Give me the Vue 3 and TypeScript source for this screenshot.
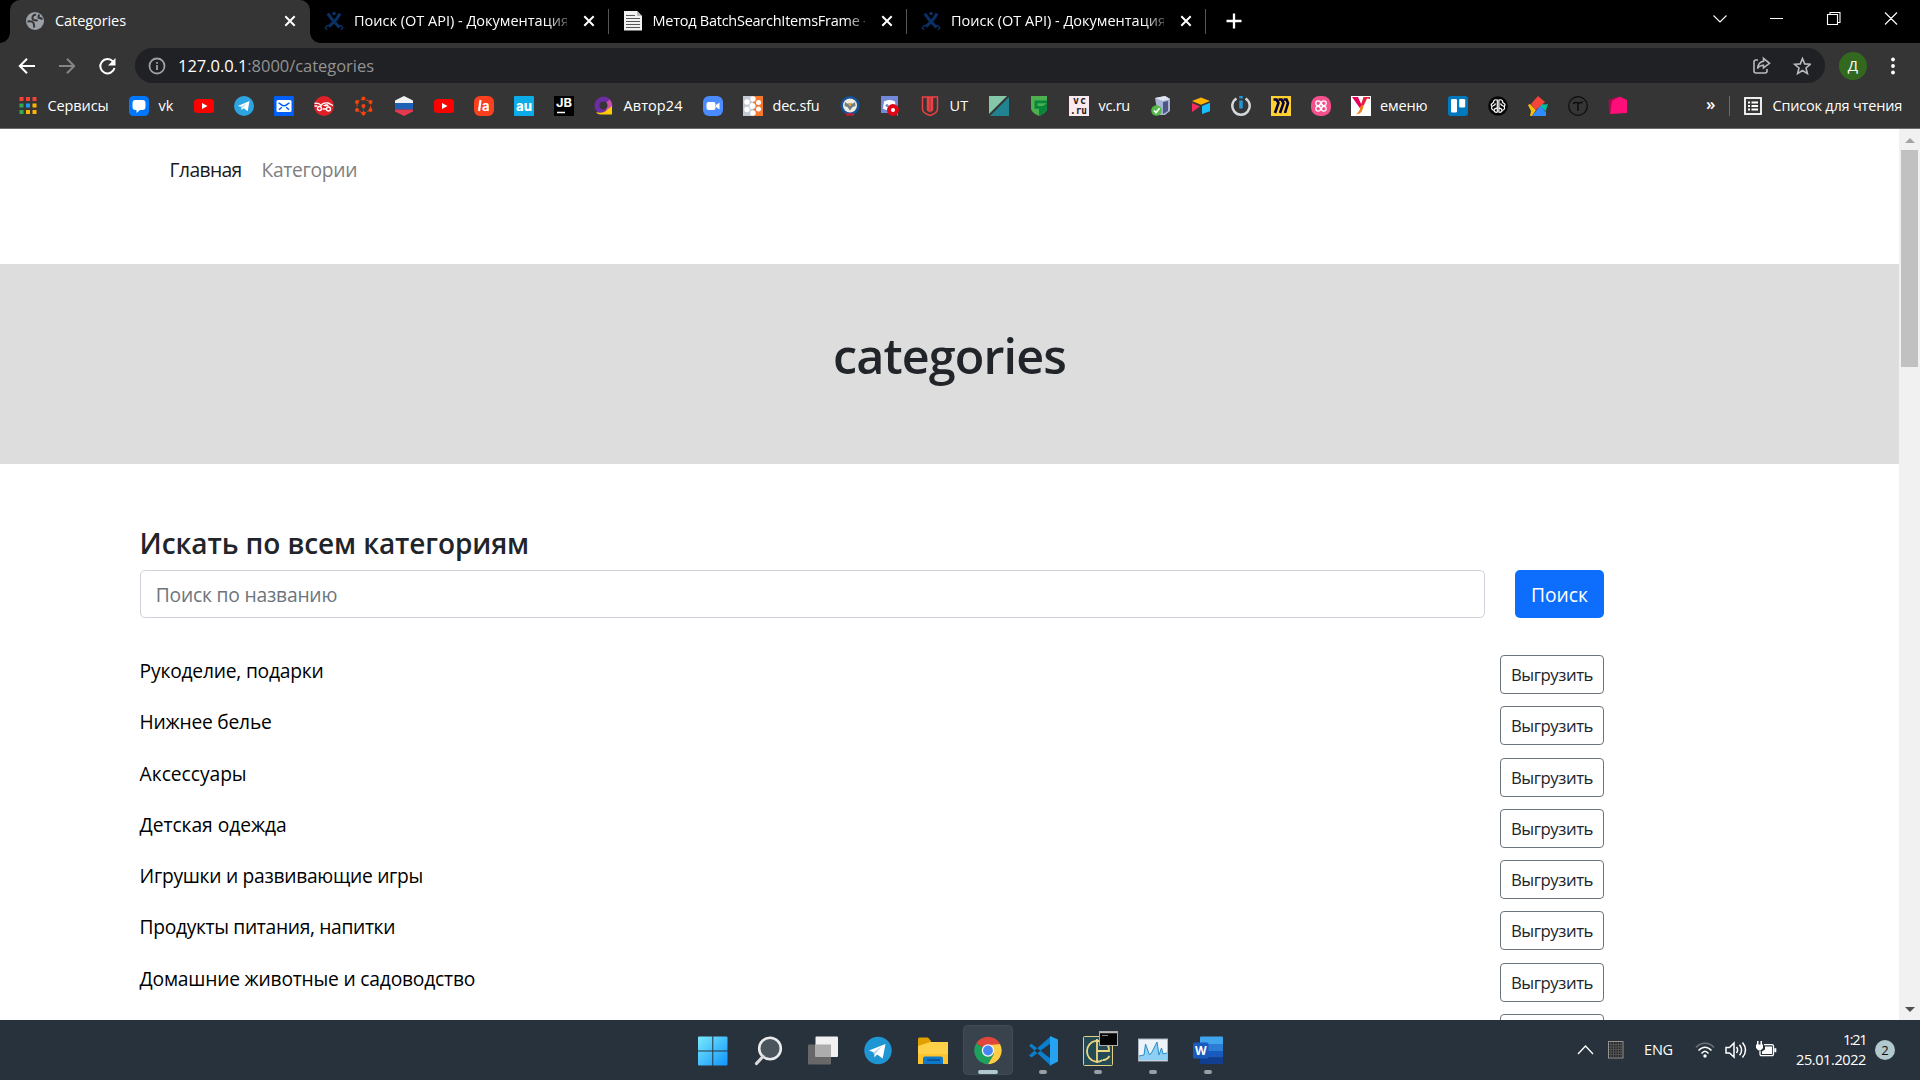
<script setup lang="ts">
import type { Directive } from 'vue'

interface Tab {
  title: string
  icon: string
  fit: number
}

interface Bookmark {
  icon: string
  label?: string
  width?: number
}

/* Tracks a label out (or in) so that it takes exactly the given width. */
const vFit: Directive<HTMLElement, number> = {
  mounted(el, { value }) {
    const length = (el.textContent ?? '').trim().length
    const natural = el.getBoundingClientRect().width
    el.style.letterSpacing = `${(value - natural) / length}px`
  },
}

const glyphs: Record<string, string> = {
  globe:
    '<circle cx="10" cy="10" r="9" fill="#9aa0a6"/><path d="M11 3.500C8 4 6.500 6 8 8.500c1 1.500 3.500 0 4.500 1.500M2.500 10.500c3-.5 5 0 6 1.500s0 3 1 4.500M14 3.500l-.5 3 4 1.500" fill="none" stroke="#353535" stroke-width="2"/>',
  confluence:
    '<g fill="none" stroke="#0b3066"><path d="M4 2.500c2.500 5 7 9 11.500 14M16 2.500c-2.500 5-5.500 8.500-11 13" stroke-width="3"/><path d="M5 14.500C1 15 0 17.500 3.500 18.500M15 14.500c4 .5 5 3 1.500 4" stroke-width="1.300"/></g><circle cx="10" cy="2.500" r="1.800" fill="#0b3066"/>',
  page:
    '<path d="M1 0h13l5 5v14.500H1z" fill="#f1f1f1"/><path d="M14 0v5h5" fill="#bbb"/><path d="M3 4.500h9M3 7.500h14M3 10.500h14M3 13.500h14M3 16.500h14" stroke="#555" stroke-width="1.200"/>',
  apps:
    '<path d="M1.500 1h4v4h-4zM8 1h4v4H8zM14.500 1h4v4h-4z" fill="#f44336"/><path d="M1.500 7.500h4v4h-4zM1.500 14h4v4h-4z" fill="#34a853"/><path d="M8 7.500h4v4H8z" fill="#2196f3"/><path d="M14.500 7.500h4v4h-4zM8 14h4v4H8zM14.500 14h4v4h-4z" fill="#fbb400"/>',
  vk:
    '<rect width="20" height="20" rx="4.500" fill="#0077ff"/><path d="M6.500 4h7a3 3 0 0 1 3 3v4a3 3 0 0 1-3 3H11l-3.500 3v-3h-1a3 3 0 0 1-3-3V7a3 3 0 0 1 3-3z" fill="#fff"/>',
  youtube: '<rect y="3" width="20" height="14" rx="3.500" fill="#f00"/><path d="M8 7l5.500 3L8 13z" fill="#fff"/>',
  telegram:
    '<circle cx="10" cy="10" r="10" fill="#2ca5e0"/><path d="M3.800 10 15.500 5l-1.800 10.200-4-3-2 1.900-.5-3.300z" fill="#fff"/><path d="M7.200 10.800L12.800 7l-4.500 5-.6 2z" fill="#a9d6ee"/>',
  mail:
    '<rect width="20" height="20" rx="1" fill="#005ff9"/><rect x="2.500" y="4" width="15" height="12" rx="1.500" fill="#fff"/><path d="M4.500 7c2 .3 3 2.800 5.500 2.800S13.500 7.300 15.500 7M5 13.800l2.800-2.600M15 13.800l-2.800-2.600" fill="none" stroke="#005ff9" stroke-width="1.500"/>',
  car:
    '<circle cx="10" cy="10" r="10" fill="#e01f26"/><path d="M.5 7.500c3-1 5 0 6.500 2 1.500-2.500 4-3 7-2.500 2 .4 3 2 5 2.500M.5 10h3M8.500 13h4" fill="none" stroke="#fff" stroke-width="1.400"/><path d="M9 10c1-1.500 3-2 5-1.500l1 2z" fill="#fff"/><circle cx="5.500" cy="12.500" r="2" fill="none" stroke="#fff" stroke-width="1.300"/><circle cx="14.500" cy="13" r="2" fill="none" stroke="#fff" stroke-width="1.300"/>',
  nodes:
    '<path d="M9.500 2.500 3 6v8l6.500 3.500 7-3.500V6zM9.500 10v7" fill="none" stroke="#f4430d" stroke-width="1" stroke-dasharray="3 1.500"/><g fill="#f4430d"><circle cx="9.500" cy="2.500" r="2"/><circle cx="3" cy="6" r="2"/><circle cx="16.500" cy="6" r="2"/><circle cx="3" cy="14" r="2"/><circle cx="16.500" cy="14" r="2"/><circle cx="9.500" cy="17.500" r="2"/><circle cx="9.500" cy="10" r="2"/></g>',
  hexflag:
    '<path d="M10 0l9 4.500V7H1V4.500z" fill="#f1f1f4"/><path d="M1 7h18v6.500H1z" fill="#1c62b7"/><path d="M1 13.500h18v2L10 20l-9-4.500z" fill="#e53950"/>',
  orange:
    '<rect width="20" height="20" rx="6" fill="#fc3f1d"/><path d="M6.500 4L5 15" stroke="#fff" stroke-width="2.200"/><text x="8" y="15" font-family="Inter" font-size="13" font-weight="700" fill="#fff">a</text>',
  au: '<rect width="20" height="20" rx="1" fill="#0bace8"/><text x="2" y="14.500" font-family="Inter" font-size="13" font-weight="800" fill="#fff" textLength="16" lengthAdjust="spacingAndGlyphs">au</text>',
  jb: '<rect width="20" height="20" fill="#000"/><text x="2" y="11" font-family="Inter" font-size="11.500" font-weight="700" fill="#fff" textLength="16" lengthAdjust="spacingAndGlyphs">JB</text><path d="M3 16.500h8" stroke="#fff" stroke-width="1.500"/>',
  avtor:
    '<circle cx="9.500" cy="9.500" r="6.500" fill="none" stroke="#6e2ca5" stroke-width="5"/><path d="M14 5A6.500 6.500 0 0 1 13 15" fill="none" stroke="#c650a8" stroke-width="4.500"/><path d="M11 15.500l7-5.500v8.500H7c-2.500 0-4-.8-5-2.500 3 1 6 1 9-.5z" fill="#fc0"/>',
  zoom: '<rect width="20" height="20" rx="6" fill="#4a8cff"/><rect x="3.500" y="6" width="9" height="8" rx="2" fill="#fff"/><path d="M13 9l3.500-2.500v7L13 11z" fill="#fff"/>',
  dec: '<rect width="10" height="20" fill="#c3cad6"/><rect x="10" width="10" height="20" fill="#f6782c"/><g fill="#fff"><circle cx="4" cy="6" r="2.700"/><circle cx="10" cy="3" r="2.700"/><circle cx="9.500" cy="10" r="3"/><circle cx="4" cy="13.500" r="2.700"/><circle cx="10" cy="17" r="2.700"/><circle cx="15.500" cy="6.500" r="2.500"/><circle cx="15.500" cy="13" r="2.500"/></g>',
  owl: '<circle cx="10" cy="9.500" r="9.500" fill="#14539a"/><circle cx="10" cy="9.500" r="7" fill="#efece0"/><path d="M5 6l2 1.500h6L15 6l.5 4-3 1-2.500 3.500L7.500 11l-3-1z" fill="#6d7b8a"/><circle cx="10" cy="8.500" r="1.500" fill="#dfa72e"/><path d="M6 18.500h8" stroke="#b81f36" stroke-width="2.500"/>',
  discord:
    '<path d="M1 0h17v20l-4-3H1z" fill="#7289da"/><path d="M4 5.500c4-2 7-2 11 0l1 7-3 1.500H6l-3-1.500z" fill="#fff"/><circle cx="7" cy="9.500" r="1.500" fill="#7289da"/><circle cx="13" cy="14" r="6" fill="#df0615"/><circle cx="13" cy="14" r="2" fill="#fff"/>',
  ut: '<path d="M2.500 1h15v12c0 3-3 5-7.500 6.500C5.500 18 2.500 16 2.500 13zM7.500 1v13l1.500 1V1M12.500 1v13l-1.500 1V1" fill="none" stroke="#ef4044" stroke-width="1.500"/>',
  diag: '<path d="M0 0h18L0 18z" fill="#84c8a9"/><path d="M20 1v19H1z" fill="#218390"/>',
  fshield: '<path d="M2 0h16v12c0 4-4 6-8 8-4-2-8-4-8-8z" fill="#4caf50"/><path d="M10 20c4-2 8-4 8-8V7l-8 6z" fill="#08863a"/><path d="M5.500 4.500H18v2.700H8.500V10H14v2.700H5.500z" fill="#08863a"/>',
  vc: '<rect width="20" height="20" fill="#fdeaee"/><g font-family="DejaVu Sans Mono, monospace" font-size="10" font-weight="700" fill="#222"><text x="4" y="8" textLength="13">vc</text><text x="1" y="17.500" textLength="17" lengthAdjust="spacingAndGlyphs">.ru</text></g>',
  server:
    '<path d="M4 2l10-2 5 3v12l-5 4H7z" fill="#aab2d5"/><path d="M4 2l10-2 5 3-7 2z" fill="#e1e4f3"/><path d="M12 6l5-1v10l-5 3z" fill="#4c5787"/><circle cx="5.500" cy="14.500" r="5.300" fill="#55b948"/><path d="M3 14.500l2 2.200 3.500-4.500" fill="none" stroke="#fff" stroke-width="1.800"/>',
  airtable: '<path d="M1 5l9-3.500L19 5l-9 3.700z" fill="#fcb400"/><path d="M1 7l8 3.500L1 16z" fill="#f82b60"/><path d="M11 10l8-3.200v8.500L11 18z" fill="#18bfff"/>',
  power:
    '<path d="M5.500 2.500A8.700 8.700 0 1 0 14.500 2.500" fill="none" stroke="#d5d8da" stroke-width="2.500"/><path d="M10 0v2.500M10 4.500v8" stroke="#2196d9" stroke-width="3.500"/>',
  miro: '<rect width="20" height="20" fill="#ffd02f"/><path d="M2.500 3.500h3l2 3.500L4 17M7.500 3.500h3l2 3.500L9 17M12.500 3.500h3l1.500 3.500L14 17" fill="none" stroke="#050038" stroke-width="2.600"/>',
  pink: '<rect width="20" height="20" rx="8.500" fill="#f3508c"/><g fill="none" stroke="#fff" stroke-width="1.300"><circle cx="7.200" cy="7.200" r="2.400"/><circle cx="12.800" cy="7.200" r="2.400"/><circle cx="7.200" cy="12.800" r="2.400"/><circle cx="12.800" cy="12.800" r="2.400"/><circle cx="10" cy="10" r="1.800"/></g>',
  emenu:
    '<rect width="20" height="20" fill="#fff"/><path d="M1 1h6l4 9-1.500 3z" fill="#e4005a"/><path d="M9.500 10l3.500-1-2 6c-1 2.500-4 3-6 3.500 2-2 3-3 4-5.500z" fill="#ef7d16"/><path d="M12.500 1H19v2l-3-.5L13 9l-3.500 1z" fill="#e4203a"/>',
  trello: '<rect width="20" height="20" rx="3" fill="#0079bf"/><rect x="3" y="3" width="6" height="13.500" rx="1.300" fill="#fff"/><rect x="11.200" y="3" width="6" height="8.500" rx="1.300" fill="#fff"/>',
  brain:
    '<circle cx="10" cy="10" r="9.800" fill="#050505"/><g fill="none" stroke="#fff" stroke-width="1.200"><path d="M9.300 3.500v13M10.900 3.500v13M9.300 4C6 3 5.500 5 5.500 6.500c-3 1.500-2.500 3-1.500 4-1 2 0 3.500 2 4 .5 2 2.500 2 3.300 1.500M10.900 4c3.300-1 3.800 1 3.800 2.500 3 1.500 2.500 3 1.500 4 1 2 0 3.500-2 4-.5 2-2.500 2-3.300 1.500M4 10.500c1.500-1 3-1 3.500-3M6 14.500c0-2 1-2 3-2.500M16 10.500c-1.500-1-3-1-3.500-3M14 14.500c0-2-1-2-3-2.500"/></g>',
  pentagon:
    '<path d="M0 9l2-1 6 6-4 6H2l1-5z" fill="#fbbc05"/><path d="M20 8l-3 .5L13 8l-1 3 6 4 .5-3z" fill="#00bfa0"/><path d="M10 0l7 6-9 8-5-6z" fill="#f8453a"/><path d="M12 10l6 6v4H4z" fill="#2f8bff"/>',
  tcircle:
    '<circle cx="10" cy="10" r="9.300" fill="none" stroke="#0c0c0c" stroke-width="1.200"/><path d="M5.500 8c0-2 2-1.700 4.500-1.200s4 .3 4.500-1.300M10 7v8" fill="none" stroke="#0c0c0c" stroke-width="1.500"/>',
  pinkbox: '<path d="M.5 4L8 1l4 3-8 12-3-1z" fill="#a50d52"/><path d="M4 5l7.500-4.500L19 4v13L2 18z" fill="#ff0d78"/>',
}

const tabs: Tab[] = [
  { title: 'Поиск (ОТ API) - Документация', icon: 'confluence', fit: 215 },
  { title: 'Метод BatchSearchItemsFrame -', icon: 'page', fit: 215 },
  { title: 'Поиск (ОТ API) - Документация', icon: 'confluence', fit: 215 },
]

const bookmarks: Bookmark[] = [
  { icon: 'apps', label: 'Сервисы', width: 61 },
  { icon: 'vk', label: 'vk', width: 15 },
  { icon: 'youtube' },
  { icon: 'telegram' },
  { icon: 'mail' },
  { icon: 'car' },
  { icon: 'nodes' },
  { icon: 'hexflag' },
  { icon: 'youtube' },
  { icon: 'orange' },
  { icon: 'au' },
  { icon: 'jb' },
  { icon: 'avtor', label: 'Автор24', width: 59 },
  { icon: 'zoom' },
  { icon: 'dec', label: 'dec.sfu', width: 47 },
  { icon: 'owl' },
  { icon: 'discord' },
  { icon: 'ut', label: 'UT', width: 19 },
  { icon: 'diag' },
  { icon: 'fshield' },
  { icon: 'vc', label: 'vc.ru', width: 31.5 },
  { icon: 'server' },
  { icon: 'airtable' },
  { icon: 'power' },
  { icon: 'miro' },
  { icon: 'pink' },
  { icon: 'emenu', label: 'еменю', width: 47.5 },
  { icon: 'trello' },
  { icon: 'brain' },
  { icon: 'pentagon' },
  { icon: 'tcircle' },
  { icon: 'pinkbox' },
]

const categories = [
  { name: 'Рукоделие, подарки', width: 184 },
  { name: 'Нижнее белье', width: 132 },
  { name: 'Аксессуары', width: 107 },
  { name: 'Детская одежда', width: 147 },
  { name: 'Игрушки и развивающие игры', width: 283.5 },
  { name: 'Продукты питания, напитки', width: 255.5 },
  { name: 'Домашние животные и садоводство', width: 335.5 },
]
</script>

<template>
  <div class="desktop">
    <header class="browser">
      <div class="tabstrip">
        <div class="tab active">
          <svg class="favicon" viewBox="0 0 20 20" v-html="glyphs.globe"></svg>
          <div class="tab-title"><span v-fit="71" class="fit">Categories</span></div>
          <svg class="close" viewBox="0 0 12 12"><path d="M1.300 1.300l9.400 9.400M10.700 1.300l-9.400 9.400" /></svg>
        </div>
        <div v-for="(tab, i) in tabs" :key="i" class="tab">
          <svg class="favicon" viewBox="0 0 20 20" v-html="glyphs[tab.icon]"></svg>
          <div class="tab-title faded"><span v-fit="tab.fit" class="fit">{{ tab.title }}</span></div>
          <svg class="close" viewBox="0 0 12 12"><path d="M1.300 1.300l9.400 9.400M10.700 1.300l-9.400 9.400" /></svg>
        </div>
        <svg class="plus" viewBox="0 0 16 16"><path d="M8 .5v15M.5 8h15" /></svg>
        <svg class="winctl" viewBox="0 0 192 20">
          <path d="M6.500 7.500l6.500 6.500 6.500-6.500M63 10.500h13M120.500 6.500h10v10h-10zM123 6.500v-2h10v10h-2.500M178 4.500l12 12M190 4.500l-12 12" />
        </svg>
      </div>

      <div class="toolbar">
        <svg class="nav-icons" viewBox="0 0 100 20">
          <path d="M17 10H2M9 2.700L1.800 10 9 17.300" stroke="#fff" />
          <path d="M41 10h15M49 2.700l7.200 7.300-7.200 7.300" stroke="#858585" />
          <path d="M95 5.500A7.200 7.200 0 1 0 96.500 12" stroke="#fff" />
          <path d="M97.500 2v7.500H90z" fill="#fff" stroke="none" />
        </svg>
        <div class="omnibox">
          <svg class="info" viewBox="0 0 18 18">
            <circle cx="9" cy="9" r="7.500" />
            <path d="M9 8v5M9 5v1.700" />
          </svg>
          <span v-fit="196" class="url fit"><b>127.0.0.1</b>:8000/categories</span>
          <svg class="omni-actions" viewBox="0 0 60 20">
            <path d="M7 4H5a2 2 0 0 0-2 2v9a2 2 0 0 0 2 2h9a2 2 0 0 0 2-2v-2" />
            <path d="M12.500 2.300l6 5-6 4.500V9.300c-3 0-4.500.7-6 3.200.4-4 2.500-6.800 6-7.300z" />
            <path d="M51.500 2.500l2.200 5.400 5.600.4-4.300 3.700 1.400 5.600-4.900-3.100-4.900 3.100 1.400-5.600-4.300-3.700 5.600-.4z" />
          </svg>
        </div>
        <span class="avatar">Д</span>
        <svg class="dots" viewBox="0 0 4 18"><circle cx="2" cy="2.500" r="1.900" /><circle cx="2" cy="9" r="1.900" /><circle cx="2" cy="15.500" r="1.900" /></svg>
      </div>

      <div class="bookmarks">
        <div v-for="(mark, i) in bookmarks" :key="i" class="bookmark">
          <svg class="bm-icon" viewBox="0 0 20 20" v-html="glyphs[mark.icon]"></svg>
          <span v-if="mark.label" v-fit="mark.width ?? 0" class="fit">{{ mark.label }}</span>
        </div>
        <div class="reading">
          <span class="more">»</span>
          <i class="divider"></i>
          <svg class="list-icon" viewBox="0 0 18 18">
            <rect x="1" y="1" width="16" height="16" />
            <path d="M4 5.500h2M4 9h2M4 12.500h2M7.500 5.500H14M7.500 9H14M7.500 12.500H14" />
          </svg>
          <span v-fit="129.5" class="fit">Список для чтения</span>
        </div>
      </div>
    </header>

    <div class="viewport">
      <main class="page">
        <nav class="navbar">
          <a v-fit="72" class="current fit">Главная</a>
          <a v-fit="95.5" class="fit">Категории</a>
        </nav>
        <section class="hero"><h1 v-fit="233" class="fit">categories</h1></section>
        <section class="container">
          <h4 v-fit="389.5" class="fit">Искать по всем категориям</h4>
          <div class="search">
            <div class="field"><span v-fit="181.5" class="fit">Поиск по названию</span></div>
            <div class="submit"><span v-fit="57" class="fit">Поиск</span></div>
          </div>
          <div class="rows">
            <div v-for="item in categories" :key="item.name" class="row">
              <a v-fit="item.width" class="fit">{{ item.name }}</a>
              <div class="export"><span v-fit="82" class="fit">Выгрузить</span></div>
            </div>
            <div class="row"><div class="export"></div></div>
          </div>
        </section>
      </main>
      <aside class="scrollbar">
        <i class="arrow up"></i>
        <div class="thumb"></div>
        <i class="arrow down"></i>
      </aside>
    </div>

    <footer class="taskbar">
      <div class="tasks">
        <div class="task">
          <svg viewBox="0 0 30 30">
            <defs><linearGradient id="win" x1="0" y1="0" x2="1" y2="1"><stop offset="0" stop-color="#7aeafd" /><stop offset="1" stop-color="#0f94fb" /></linearGradient></defs>
            <path d="M0 1.500A1 1 0 0 1 1 .5h13.300v14H0zM15.300.5h13.200a1 1 0 0 1 1 1v13H15.300zM0 15.500h14.300v14H1a1 1 0 0 1-1-1zM15.300 15.500h14.200v13a1 1 0 0 1-1 1H15.300z" fill="url(#win)" />
          </svg>
        </div>
        <div class="task">
          <svg viewBox="0 0 30 30"><circle cx="17" cy="12.500" r="10.800" fill="#4b555e" stroke="#e9ebec" stroke-width="2.600" /><path d="M10 20.500l-6.500 7" stroke="#d8dadb" stroke-width="3.200" stroke-linecap="round" /></svg>
        </div>
        <div class="task">
          <svg viewBox="0 0 30 30"><rect y="8.500" width="23" height="20" rx="1" fill="#686868" /><rect x="7.500" y=".5" width="22.500" height="20.500" rx="1" fill="#f1f1f1" /><path d="M7.500 8.500H23V21H7.500z" fill="#adadad" /></svg>
        </div>
        <div class="task">
          <svg viewBox="0 0 30 30"><circle cx="15" cy="14.500" r="13.700" fill="#1f96d4" /><path d="M6 14.500L22.500 8l-2.800 14.500-5.500-4-2.700 2.700-.9-4.900z" fill="#fff" /><path d="M10.600 16.300l8-5.800-6 6.800-1.100 3.900z" fill="#a5d3ec" /></svg>
        </div>
        <div class="task">
          <svg viewBox="0 0 30 30"><path d="M0 3a1.500 1.500 0 0 1 1.500-1.500H10L13 5v5H0z" fill="#e0a000" /><path d="M0 10l12-4h18v21a1 1 0 0 1-1 1H1a1 1 0 0 1-1-1z" fill="#ffd149" /><path d="M0 18h30v9a1 1 0 0 1-1 1H1a1 1 0 0 1-1-1z" fill="#fcc42e" /><path d="M5 28v-5.500a2 2 0 0 1 2-2h16a2 2 0 0 1 2 2V28z" fill="#0f78c8" /><path d="M9 24h13" stroke="#0a4d8a" stroke-width="1.500" /></svg>
        </div>
        <div class="task focused">
          <svg viewBox="0 0 30 30">
            <path d="M15 14.500L3.200 7.600A13.700 13.700 0 0 1 26.900 7.600z" fill="#e0473a" />
            <path d="M15 14.500L3.200 7.600A13.700 13.700 0 0 0 15 28.200l6-10.300z" fill="#1fa15d" />
            <path d="M15 8.500l12-.6A13.700 13.700 0 0 1 15 28.200l6-10.300z" fill="#fdce44" />
            <path d="M15 8h11.900L15 9z" fill="#e0473a" />
            <circle cx="15" cy="14.500" r="6.200" fill="#f4f4f4" /><circle cx="15" cy="14.500" r="4.900" fill="#4486f4" />
          </svg>
          <i class="mark wide"></i>
        </div>
        <div class="task">
          <svg viewBox="0 0 30 30"><path d="M1 9.500l2.500-1.800L23 23v7zM1 19.500l2.500 2L23 7V0z" fill="#0b7fcb" /><path d="M22 0l8 3.500v22L22 29.500z" fill="#25a3f2" /></svg>
          <i class="mark"></i>
        </div>
        <div class="task">
          <svg viewBox="0 0 30 30">
            <rect x=".5" y=".5" width="29" height="29" rx="1" fill="#244a55" stroke="#e6cf83" />
            <path d="M19.500 6.500A10 10.500 0 1 0 19.500 24M14 3v24M14 15h12c0-6-2-8.500-6-8.500M20 24c3 0 5-1.500 6.500-4" fill="none" stroke="#eed681" stroke-width="1.800" />
          </svg>
          <svg class="console" viewBox="0 0 19 15"><rect x=".5" y=".5" width="18" height="14" fill="#050505" stroke="#aaa" /><path d="M1 1.500h17" stroke="#bbb" stroke-width="1.500" /><path d="M3 4.500h6" stroke="#888" /></svg>
          <i class="mark"></i>
        </div>
        <div class="task">
          <svg viewBox="0 0 30 30"><rect x=".5" y="3" width="29" height="22" fill="#eef3f8" stroke="#a9b4bf" /><path d="M1 20l5-1 1.500-11 4 11 2.500-3 3-6 2-4 2 13 2.500-7 1.500 6 4-1v7H1z" fill="#8ecff5" /><path d="M1 20l5-1 1.500-11 4 11 2.500-3 3-6 2-4 2 13 2.500-7 1.500 6 4-1" fill="none" stroke="#278cc9" /></svg>
          <i class="mark"></i>
        </div>
        <div class="task">
          <svg viewBox="0 0 30 30">
            <path d="M7 1.500A1 1 0 0 1 8 .5h21a1 1 0 0 1 1 1V8H7z" fill="#41a5ee" /><path d="M7 8h23v7H7z" fill="#2b7cd3" /><path d="M7 15h23v6.500H7z" fill="#185abd" /><path d="M7 21.500h23V27a1 1 0 0 1-1 1H8a1 1 0 0 1-1-1z" fill="#103f91" />
            <rect y="6.500" width="15.500" height="16" rx="1.500" fill="#185abd" /><text x="2" y="18.500" font-family="Open Sans" font-size="12" font-weight="700" fill="#fff">W</text>
          </svg>
          <i class="mark"></i>
        </div>
      </div>

      <div class="tray">
        <svg class="tray-left" viewBox="0 0 48 20">
          <path d="M1 14l7.500-8 7.500 8" fill="none" stroke="#fff" stroke-width="1.300" />
          <rect x="31.500" y="1.500" width="14.500" height="16.500" fill="#25292d" stroke="#97938f" />
          <path d="M34 2v16M36.500 2v16M39 2v16M41.500 2v16M44 2v16M32 4.500h14M32 7h14M32 9.500h14M32 12h14M32 14.500h14" stroke="#5d5b59" stroke-width=".8" />
        </svg>
        <span v-fit="29" class="lang fit">ENG</span>
        <svg class="tray-icons" viewBox="0 0 82 20" fill="none" stroke="#fff" stroke-width="1.500">
          <path d="M1 7.500c5-5.800 13-5.800 18 0" stroke="#6b747c" />
          <path d="M3.500 10.500c4-4.500 9-4.500 13 0M6.500 13.500c2.500-3 4.500-3 7 0" /><circle cx="10" cy="16" r="1.700" fill="#fff" stroke="none" />
          <path d="M31 7.500h3.500L39 3v14l-4.500-4H31zM41.500 7c1.500 2 1.500 4 0 6M44.500 4.700c2.700 3.400 2.700 7.200 0 10.600M47.500 2.500c4 5 4 10 0 15" />
          <path d="M69 4.700h8a1.500 1.500 0 0 1 1.500 1.500v8a1.500 1.500 0 0 1-1.500 1.500H66.500a1.500 1.500 0 0 1-1.500-1.500V11" stroke-width="1.300" />
          <path d="M70 6.500h7v7.500H67v-2.500l3-2z" fill="#fff" stroke="none" /><path d="M80.300 8.200v4" stroke-width="2" />
          <path d="M61 4.500h7V8l-2.500 2.500h-2L61 8zM62 1h1.500v4H62zM65.500 1H67v4h-1.500z" fill="#fff" stroke="none" />
        </svg>
        <div class="clock"><span v-fit="23" class="fit">1:21</span><span v-fit="70" class="fit">25.01.2022</span></div>
        <span class="badge">2</span>
      </div>
    </footer>
  </div>
</template>

<style>
body {
  margin: 0;
  overflow: hidden;
}
</style>

<style scoped>
.desktop {
  display: flex;
  flex-direction: column;
  width: 1920px;
  height: 1080px;
  overflow: hidden;
  background: #fff;
  font-family: 'Open Sans', 'Noto Sans', sans-serif;
  font-size: 14.5px;
  line-height: 20px;
  color: #fff;
}

svg {
  display: block;
  flex: none;
}

.fit {
  display: inline-block;
  white-space: pre;
}

.browser {
  box-sizing: border-box;
  flex: none;
  height: 129px;
  background: #353535;
  border-bottom: 1px solid #6b6b6b;
}

.tabstrip {
  display: flex;
  height: 43px;
  background: #000;
}

.tab {
  position: relative;
  display: flex;
  align-items: center;
  box-sizing: border-box;
  width: 298.5px;
  height: 43px;
  padding: 0 14px 1px 14px;
}

.tab:not(.active)::after {
  content: '';
  position: absolute;
  right: 0;
  top: 9px;
  width: 1px;
  height: 25px;
  background: #555;
}

.tab.active {
  width: 300px;
  margin-left: 10px;
  padding-left: 15px;
  background: #353535;
  border-radius: 10px 10px 0 0;
}

.tab.active::before,
.tab.active::after {
  content: '';
  position: absolute;
  bottom: 0;
  width: 10px;
  height: 10px;
}

.tab.active::before {
  left: -10px;
  background: radial-gradient(circle at 0 0, transparent 9.5px, #353535 10px);
}

.tab.active::after {
  right: -10px;
  background: radial-gradient(circle at 100% 0, transparent 9.5px, #353535 10px);
}

.favicon {
  width: 20px;
  height: 20px;
}

.tab-title {
  flex: 1;
  min-width: 0;
  margin-left: 10px;
  white-space: nowrap;
}

.faded {
  -webkit-mask-image: linear-gradient(to right, #000 192px, transparent 222px);
  mask-image: linear-gradient(to right, #000 192px, transparent 222px);
}

.close {
  width: 12px;
  height: 12px;
  margin: 0 0 0 16px;
  fill: none;
  stroke: #fff;
  stroke-width: 2;
}

.plus {
  width: 16px;
  height: 16px;
  margin: 13px 0 0 20px;
  fill: none;
  stroke: #fff;
  stroke-width: 2.3;
}

.winctl {
  width: 192px;
  height: 20px;
  margin: 8px 21px 0 auto;
  fill: none;
  stroke: #fff;
  stroke-width: 1.1;
}

.toolbar {
  display: flex;
  align-items: center;
  height: 45px;
}

.nav-icons {
  width: 100px;
  height: 20px;
  margin-left: 18px;
  fill: none;
  stroke-width: 2;
}

.omnibox {
  display: flex;
  align-items: center;
  box-sizing: border-box;
  width: 1690px;
  height: 35px;
  margin-left: 17px;
  padding: 0 14px 0 13px;
  border-radius: 18px;
  background: #202124;
}

.info {
  width: 18px;
  height: 18px;
  fill: none;
  stroke: #9aa0a6;
  stroke-width: 1.8;
}

.url {
  margin-left: 12px;
  font-size: 16.5px;
  line-height: 30px;
  color: #939393;
}

.url b {
  font-weight: 400;
  color: #fff;
}

.omni-actions {
  width: 60px;
  height: 20px;
  margin-left: auto;
  fill: none;
  stroke: #b9babc;
  stroke-width: 1.6;
}

.avatar {
  width: 28px;
  height: 28px;
  margin-left: 14px;
  border-radius: 50%;
  background: #33691e;
  font-size: 15px;
  line-height: 27px;
  text-align: center;
}

.dots {
  width: 4px;
  height: 18px;
  margin-left: 23.5px;
  fill: #fff;
}

.bookmarks {
  display: flex;
  align-items: center;
  gap: 20px;
  height: 36px;
  padding-left: 18px;
}

.bookmark {
  display: flex;
  align-items: center;
  gap: 10px;
}

.bookmark .fit {
  position: relative;
  left: -0.5px;
}

.bm-icon {
  width: 20px;
  height: 20px;
}

.reading {
  display: flex;
  align-items: center;
  margin: 0 18px 0 auto;
}

.more {
  font-size: 17px;
  font-weight: 600;
  margin-top: -4px;
}

.divider {
  width: 1px;
  height: 20px;
  margin: 0 14px 0 13px;
  background: #6b6b6b;
}

.list-icon {
  width: 18px;
  height: 18px;
  margin-right: 11px;
  fill: none;
  stroke: #fff;
  stroke-width: 1.8;
}

.viewport {
  display: flex;
  flex: 1;
  min-height: 0;
  background: #fff;
}

.page {
  width: 1899px;
  overflow: hidden;
  font-size: 19.25px;
  line-height: 30px;
  color: #000;
}

.navbar {
  display: flex;
  gap: 20px;
  height: 109px;
  padding: 26px 0 0 169.6px;
  color: #808080;
}

.navbar .current {
  color: #1a1a1a;
}

.hero {
  display: flex;
  justify-content: center;
  box-sizing: border-box;
  height: 200px;
  padding-top: 61px;
  background: #ddd;
}

h1,
h4 {
  margin: 0;
  font-weight: 600;
  color: #212529;
}

h1 {
  height: 60px;
  font-size: 48.5px;
  line-height: 60px;
}

.container {
  width: 1464px;
  margin-left: 140px;
  padding-top: 61px;
}

h4 {
  font-size: 28px;
  line-height: 36px;
  height: 45px;
  margin-left: -0.4px;
}

.search {
  display: flex;
  gap: 30px;
}

.field,
.submit {
  box-sizing: border-box;
  height: 48px;
  border-radius: 5px;
  line-height: 48px;
}

.field {
  flex: 1;
  padding-left: 14.7px;
  border: 1px solid #ced4da;
  color: #6c757d;
}

.submit {
  width: 89px;
  padding: 1px 0 0 16px;
  background: #0d6efd;
  color: #fff;
}

.rows {
  padding-top: 37px;
}

.row {
  display: flex;
  justify-content: space-between;
  height: 51.25px;
}

.row > a {
  margin-left: -0.4px;
  line-height: 32px;
}

.export {
  box-sizing: border-box;
  width: 104px;
  height: 39px;
  margin-left: auto;
  padding-left: 10px;
  border: 1px solid #6c757d;
  border-radius: 4px;
  font-size: 16.75px;
  line-height: 38px;
  color: #212529;
}

.scrollbar {
  display: flex;
  flex-direction: column;
  align-items: center;
  box-sizing: border-box;
  width: 21px;
  padding: 9px 0 8px;
  background: #f1f1f1;
}

.arrow {
  width: 0;
  height: 0;
  border: 5px solid transparent;
}

.up {
  border-top: 0;
  border-bottom-color: #a3a3a3;
}

.down {
  margin-top: auto;
  border-bottom: 0;
  border-top-color: #505050;
}

.thumb {
  width: 17px;
  height: 217px;
  margin-top: 7px;
  background: #c1c1c1;
}

.taskbar {
  display: flex;
  justify-content: flex-end;
  flex: none;
  height: 60px;
  background: #28323c;
}

.tasks {
  display: flex;
  gap: 5px;
  margin: 5px auto 0 688px;
}

.task {
  position: relative;
  box-sizing: border-box;
  width: 50px;
  height: 50px;
  padding: 10.5px 10px 9.5px;
  border-radius: 5px;
}

.task > svg {
  width: 30px;
  height: 30px;
}

.focused {
  background: #39434d;
  box-shadow: inset 0 0 0 1px #424b55;
}

.task > .console {
  position: absolute;
  left: 26px;
  top: 6px;
  width: 19px;
  height: 15px;
}

.mark {
  position: absolute;
  left: 21px;
  bottom: 1px;
  width: 8px;
  height: 4px;
  border-radius: 2px;
  background: #9a9fa4;
}

.mark.wide {
  left: 15px;
  width: 20px;
  background: #b0c8d0;
}

.tray {
  display: flex;
  align-items: center;
  margin-right: 25px;
}

.tray-left {
  width: 48px;
  height: 20px;
}

.lang {
  margin-left: 19px;
}

.tray-icons {
  width: 82px;
  height: 20px;
  margin-left: 22px;
}

.clock {
  display: flex;
  flex-direction: column;
  align-items: flex-end;
  margin-left: 19px;
}

.badge {
  width: 20px;
  height: 20px;
  margin-left: 9px;
  border-radius: 50%;
  background: #b0c8ce;
  color: #111;
  font-size: 13px;
  text-align: center;
}
</style>
